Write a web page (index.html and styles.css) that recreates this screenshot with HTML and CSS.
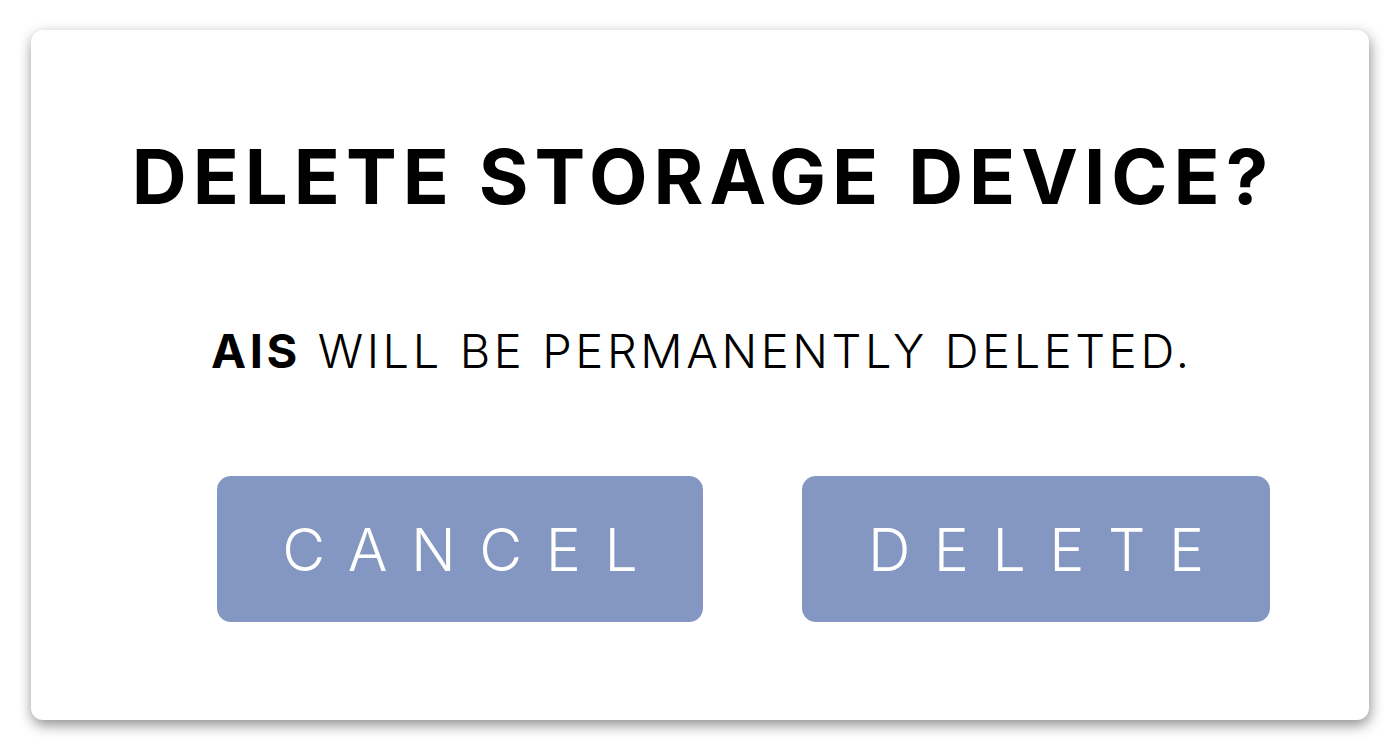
FILE: index.html
```html
<!DOCTYPE html>
<html lang="en">
<head>
    <meta charset="UTF-8">
    <meta name="viewport" content="width=device-width, initial-scale=1.0">
    <title>Delete storage device</title>
    <link rel="stylesheet" href="styles.css">
</head>
<body>
    <div class="dialog">
        <h1 class="dialog-title">DELETE STORAGE DEVICE?</h1>
        <p class="dialog-message"><strong>AIS</strong> WILL BE PERMANENTLY DELETED.</p>
        <div class="dialog-actions">
            <button type="button" class="btn btn-cancel">CANCEL</button>
            <button type="button" class="btn btn-delete">DELETE</button>
        </div>
    </div>
</body>
</html>
```
FILE: styles.css
```css
/* Reset basico */
* {
    margin: 0;
    padding: 0;
    box-sizing: border-box;
}

body {
    font-family: 'Inter', 'Noto Sans', sans-serif;
    background: #fff;
    color: #000;
    padding: 30px 31px 36px 31px;
}

.dialog {
    width: 1338px;
    height: 690px;
    background: #fff;
    border-radius: 12px;
    box-shadow: 1px 5px 14px rgba(0, 0, 0, 0.45);
    display: flex;
    flex-direction: column;
    align-items: center;
    padding-top: 108px;
}

.dialog-title {
    font-size: 76px;
    font-weight: 700;
    line-height: 1;
    letter-spacing: 6px;
    text-indent: 6px;
    text-align: center;
}

.dialog-message {
    margin-top: 113px;
    font-size: 47px;
    font-weight: 300;
    line-height: 1;
    letter-spacing: 3.6px;
    text-indent: 3.6px;
}

.dialog-message strong {
    font-weight: 700;
}

.dialog-actions {
    align-self: stretch;
    display: flex;
    gap: 99px;
    padding: 0 99px 0 186px;
    margin-top: 102px;
}

.btn {
    height: 146px;
    border: none;
    border-radius: 14px;
    background-color: #8497c2;
    color: #fff;
    font-family: inherit;
    font-size: 59px;
    font-weight: 300;
    letter-spacing: 23.5px;
    text-indent: 23.5px;
    cursor: pointer;
}

.btn-cancel {
    width: 486px;
}

.btn-delete {
    width: 468px;
}
```
